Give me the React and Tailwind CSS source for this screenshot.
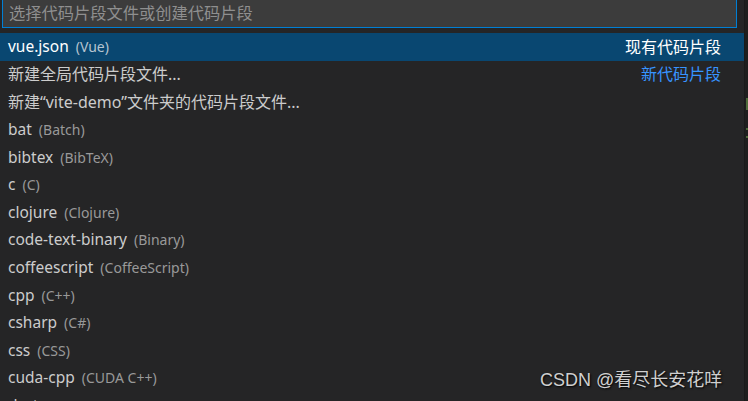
import React from 'react';

const items = [
  { label: 'bat', desc: 'Batch' },
  { label: 'bibtex', desc: 'BibTeX' },
  { label: 'c', desc: 'C' },
  { label: 'clojure', desc: 'Clojure' },
  { label: 'code-text-binary', desc: 'Binary' },
  { label: 'coffeescript', desc: 'CoffeeScript' },
  { label: 'cpp', desc: 'C++' },
  { label: 'csharp', desc: 'C#' },
  { label: 'css', desc: 'CSS' },
  { label: 'cuda-cpp', desc: 'CUDA C++' },
  { label: 'dart', desc: 'Dart' },
];

const font = { fontFamily: '"Noto Sans", "Noto Sans CJK SC", sans-serif' };

const App = () => {
  return (
    <div className="relative w-[748px] h-[401px] overflow-hidden bg-[#1e1e1e] flex" style={font}>
      {/* quick pick panel */}
      <div className="w-[744px] h-full bg-[#252526] flex flex-col">
        <div className="pl-[2px] pr-[7px]">
          <div className="h-[30px] -mt-[2px] border border-[#007fd4] bg-[#3c3c3c] flex items-center px-[6px] text-[16.25px] text-[#8f8f8f]">
            选择代码片段文件或创建代码片段
          </div>
        </div>

        <div className="mt-[5px] flex flex-col text-[15.5px]">
          <div className="h-[27.6px] shrink-0 bg-[#094771] flex items-center px-[8px] text-white">
            <span>vue.json</span>
            <span className="ml-[7px] text-[14px] text-[#b6c4d0]">(Vue)</span>
            <span className="ml-auto mr-[15px] text-[16px]">现有代码片段</span>
          </div>
          <div className="h-[27.6px] shrink-0 flex items-center px-[8px] text-[16px] text-[#cccccc]">
            <span>新建全局代码片段文件...</span>
            <span className="ml-auto mr-[15px] text-[#3794ff]">新代码片段</span>
          </div>
          <div className="h-[27.6px] shrink-0 flex items-center px-[8px] text-[16px] text-[#cccccc]">
            <span>新建“vite-demo”文件夹的代码片段文件...</span>
          </div>
          {items.map((it) => (
            <div key={it.label} className="h-[27.6px] shrink-0 flex items-center px-[8px] text-[#cccccc]">
              <span>{it.label}</span>
              <span className="ml-[7px] text-[14px] text-[#999999]">({it.desc})</span>
            </div>
          ))}
        </div>
      </div>

      {/* editor strip behind */}
      <div className="flex-1 relative border-l border-[#1a1a1a]">
        <div className="absolute left-[1px] top-[98px] w-[3px] h-[12px] bg-[#4e6b3a]" />
        <div className="absolute left-[1px] top-[128px] w-[3px] h-[2px] bg-[#4e6b3a]" />
        <div className="absolute left-[1px] top-[136px] w-[3px] h-[2px] bg-[#4e6b3a]" />
      </div>

      {/* watermark */}
      <div
        className="absolute left-[540px] top-[367px] text-[18px] text-[#cfcfcf] [text-shadow:1px_1px_2px_#000]"
        style={{ fontFamily: '"Liberation Sans", "Noto Sans CJK SC", sans-serif' }}
      >
        CSDN @看尽长安花咩
      </div>
    </div>
  );
};

export default App;
